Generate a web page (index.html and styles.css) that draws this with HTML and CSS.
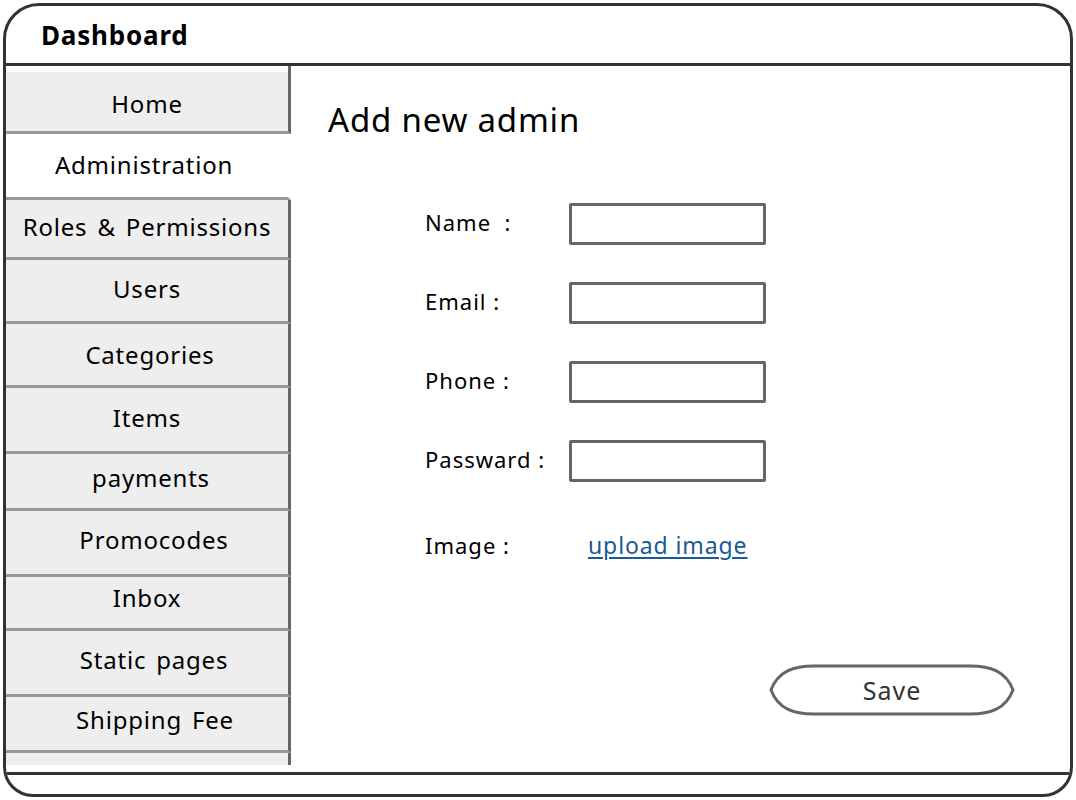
FILE: index.html
```html
<!DOCTYPE html>
<html lang="en">
<head>
<meta charset="utf-8">
<title>Dashboard</title>
<link rel="stylesheet" href="styles.css">
</head>
<body>
<div class="frame">
  <header class="titlebar">Dashboard</header>
  <div class="main">
    <nav class="sidebar">
      <div class="nav-top"></div>
      <div class="nav-item">Home</div>
      <div class="nav-item active">Administration</div>
      <div class="nav-item">Roles &amp; Permissions</div>
      <div class="nav-item">Users</div>
      <div class="nav-item">Categories</div>
      <div class="nav-item">Items</div>
      <div class="nav-item">payments</div>
      <div class="nav-item">Promocodes</div>
      <div class="nav-item">Inbox</div>
      <div class="nav-item">Static pages</div>
      <div class="nav-item">Shipping Fee</div>
      <div class="nav-item nav-end"></div>
    </nav>
    <section class="content">
      <h1 class="page-title">Add new admin</h1>
      <div class="form">
        <label class="label">Name&nbsp; :</label>
        <div class="input"></div>
        <label class="label">Email :</label>
        <div class="input"></div>
        <label class="label">Phone :</label>
        <div class="input"></div>
        <label class="label">Passward :</label>
        <div class="input"></div>
        <label class="label image-label">Image :</label>
        <a class="upload" href="#">upload image</a>
      </div>
      <div class="actions">
        <button class="save" type="button">
          <svg class="save-shape" width="248" height="56" viewBox="0 0 248 56">
            <path d="M3 28 C10 9 26 4 46 4 L202 4 C222 4 238 9 245 28 C238 47 222 52 202 52 L46 52 C26 52 10 47 3 28 Z" fill="#fff" stroke="#666" stroke-width="3"/>
          </svg>
          <span class="save-text">Save</span>
        </button>
      </div>
    </section>
  </div>
  <footer class="bottombar"></footer>
</div>
</body>
</html>
```

FILE: styles.css
```css
* { box-sizing: border-box; }

html, body {
  margin: 0;
  padding: 0;
  background: #fff;
}

body {
  font-family: "Noto Sans", "DejaVu Sans", sans-serif;
  color: #000;
}

.frame {
  margin: 3px 0 0 3px;
  width: 1070px;
  height: 794px;
  border: 3px solid #333;
  border-radius: 36px 36px 30px 30px;
  display: flex;
  flex-direction: column;
  overflow: hidden;
}

.titlebar {
  height: 60px;
  flex: none;
  border-bottom: 3px solid #333;
  padding-left: 35px;
  font-size: 26px;
  font-weight: 700;
  line-height: 58px;
  letter-spacing: 0.8px;
}

.main {
  flex: 1;
  display: flex;
  min-height: 0;
}

.sidebar {
  width: 285px;
  flex: none;
  display: flex;
  flex-direction: column;
}

.nav-top {
  height: 6px;
  border-right: 3px solid #666;
}

.nav-item {
  display: flex;
  align-items: center;
  justify-content: center;
  background: #eee;
  border-right: 3px solid #666;
  border-bottom: 3px solid #999;
  font-size: 24px;
  letter-spacing: 0.8px;
  word-spacing: 3px;
  padding-bottom: 5px;
  white-space: nowrap;
}

.nav-item.active {
  background: #fff;
  border-right-color: #fff;
  padding-right: 6px;
  padding-bottom: 3px;
}

.nav-item:nth-child(2) { height: 62px; padding-bottom: 0; padding-top: 4px; }
.nav-item:nth-child(3) { height: 66px; }
.nav-item:nth-child(4) { height: 60px; }
.nav-item:nth-child(5) { height: 64px; }
.nav-item:nth-child(6) { height: 64px; padding-left: 6px; padding-bottom: 1px; }
.nav-item:nth-child(7) { height: 66px; }
.nav-item:nth-child(8) { height: 57px; padding-left: 8px; padding-bottom: 8px; }
.nav-item:nth-child(9) { height: 66px; padding-left: 14px; padding-bottom: 7px; }
.nav-item:nth-child(10) { height: 54px; padding-bottom: 10px; }
.nav-item:nth-child(11) { height: 66px; padding-left: 14px; padding-bottom: 7px; }
.nav-item:nth-child(12) { height: 56px; padding-left: 16px; padding-bottom: 8px; }
.nav-item.nav-end {
  height: 12px;
  border-bottom: none;
  padding: 0;
}

.content {
  flex: 1;
  padding: 32px 0 0 37px;
  display: flex;
  flex-direction: column;
}

.page-title {
  margin: 0;
  font-size: 33px;
  font-weight: 400;
  line-height: 44px;
  letter-spacing: 0.8px;
}

.form {
  margin: 61px 0 0 97px;
  display: grid;
  grid-template-columns: 144px 197px;
  grid-auto-rows: 42px;
  row-gap: 37px;
  align-items: center;
}

.label {
  font-size: 22px;
  line-height: 1;
  margin-top: -4px;
  letter-spacing: 1px;
  white-space: nowrap;
}

.input {
  height: 42px;
  border: 3px solid #666;
  border-radius: 2px;
  background: #fff;
}

.image-label {
  margin-top: 10px;
}

.upload {
  margin-top: 10px;
  margin-left: 19px;
  font-size: 23px;
  letter-spacing: 0.9px;
  color: #1a5a96;
  text-decoration: underline;
  text-underline-offset: 3px;
  text-decoration-thickness: 2px;
  white-space: nowrap;
}

.actions {
  display: flex;
  justify-content: flex-end;
  padding-right: 54px;
  margin-top: 101px;
}

.save {
  position: relative;
  width: 248px;
  height: 56px;
  padding: 0;
  border: none;
  background: transparent;
  font-family: inherit;
  font-size: 25px;
  letter-spacing: 1px;
  color: #333;
  cursor: pointer;
}

.save-shape {
  position: absolute;
  left: 0;
  top: 0;
}

.save-text {
  position: relative;
}

.bottombar {
  height: 22px;
  flex: none;
  border-top: 3px solid #333;
}
```
